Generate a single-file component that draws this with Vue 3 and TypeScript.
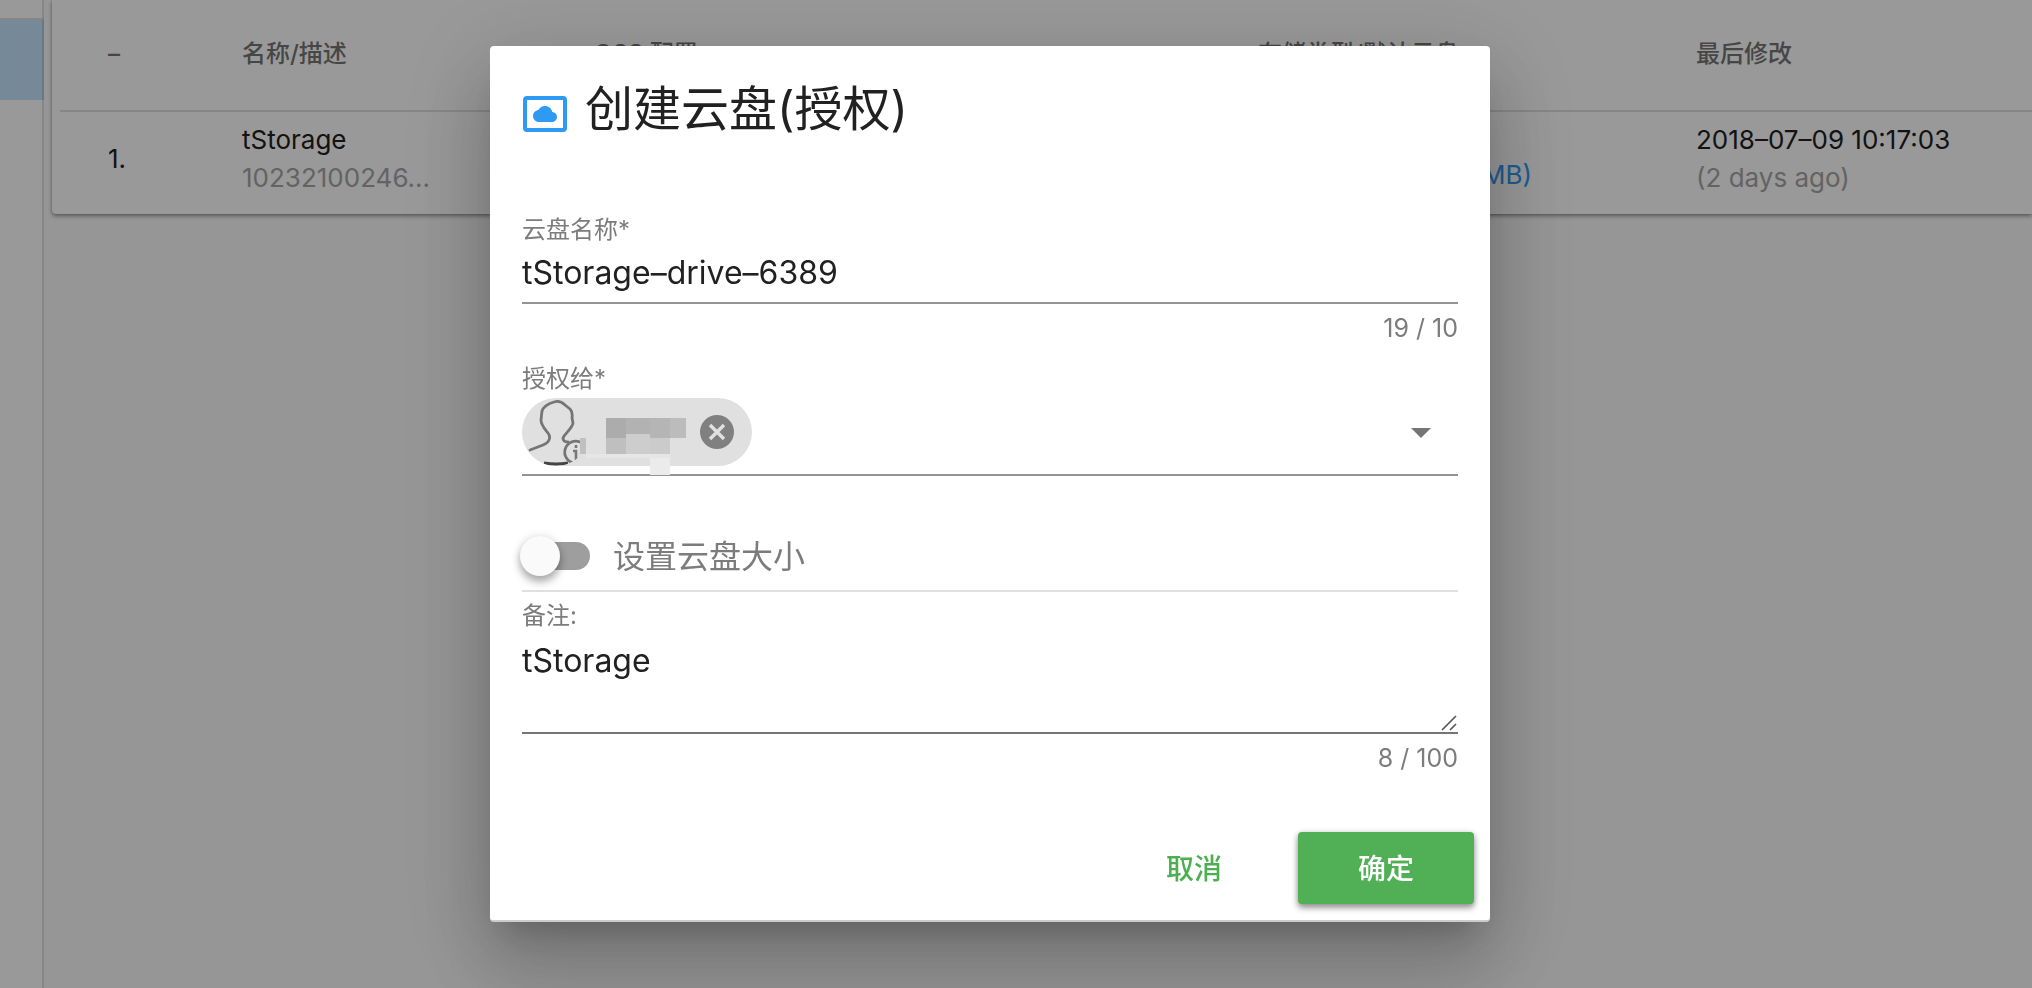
<script setup lang="ts">
import { ref } from 'vue'

const driveName = ref('tStorage–drive–6389')
const remark = ref('tStorage')
const sized = ref(false)

interface Block {
  x: number
  y: number
  w: number
  h: number
  fill: string
}

const blocks: Block[] = [
  { x: 64, y: 56, w: 84, h: 4, fill: '#e6e6e6' },
  { x: 58, y: 40, w: 6, h: 16, fill: '#c0c0c0' },
  { x: 84, y: 20, w: 20, h: 20, fill: '#acacac' },
  { x: 104, y: 20, w: 24, h: 16, fill: '#b2b2b2' },
  { x: 128, y: 20, w: 20, h: 20, fill: '#b5b5b5' },
  { x: 148, y: 20, w: 16, h: 20, fill: '#bcbcbc' },
  { x: 84, y: 40, w: 20, h: 16, fill: '#bfbfbf' },
  { x: 104, y: 36, w: 24, h: 20, fill: '#cdcdcd' },
  { x: 128, y: 40, w: 20, h: 16, fill: '#cbcbcb' },
  { x: 128, y: 60, w: 20, h: 17, fill: '#ebebeb' },
]
</script>

<template>
  <div class="page">
    <nav class="side"><div class="side-item"></div></nav>
    <main class="content">
      <section class="card">
        <table class="grid">
          <colgroup>
            <col class="c-index" /><col class="c-name" /><col class="c-oss" /><col class="c-type" /><col />
          </colgroup>
          <thead>
            <tr>
              <th>–</th>
              <th>名称/描述</th>
              <th>OSS 配置</th>
              <th>存储类型/默认云盘</th>
              <th>最后修改</th>
            </tr>
          </thead>
          <tbody>
            <tr>
              <td>1.</td>
              <td>
                <div>tStorage</div>
                <div class="muted">10232100246...</div>
              </td>
              <td></td>
              <td><a class="quota" href="#">MB)</a></td>
              <td>
                <div>2018–07–09 10:17:03</div>
                <div class="muted">(2 days ago)</div>
              </td>
            </tr>
          </tbody>
        </table>
      </section>
    </main>
  </div>

  <div class="overlay">
    <form class="dialog" role="dialog" aria-labelledby="dialog-title" @submit.prevent>
      <header class="head">
        <svg class="head-icon" viewBox="0 0 44 36" aria-hidden="true">
          <rect x="2" y="2" width="40" height="32" rx="2" fill="none" stroke="#2f9af3" stroke-width="4" />
          <path
            transform="translate(10 6)"
            fill="#2f9af3"
            d="M19.35 10.04C18.67 6.59 15.64 4 12 4 9.11 4 6.6 5.64 5.35 8.04 2.34 8.36 0 10.91 0 14c0 3.31 2.69 6 6 6h13c2.76 0 5-2.24 5-5 0-2.64-2.05-4.78-4.65-4.96z"
          />
        </svg>
        <h1 id="dialog-title">创建云盘(授权)</h1>
      </header>

      <div class="field">
        <label for="drive-name">云盘名称*</label>
        <input id="drive-name" v-model="driveName" class="line-input" type="text" />
        <div class="counter">{{ driveName.length }} / 10</div>
      </div>

      <div class="field grantee">
        <span id="grantee-label" class="label">授权给*</span>
        <div class="picker" role="combobox" aria-labelledby="grantee-label" aria-expanded="false" tabindex="0">
          <div class="chip">
            <svg class="avatar" viewBox="0 0 68 68" aria-hidden="true">
              <g fill="none" stroke="#757575" stroke-width="2.8" stroke-linecap="round" stroke-linejoin="round">
                <path d="M8 52L21 47C28 44 29 39 26 35C22 30 19 27 19 22L20 13Q22 7 32 4Q38 2 43 7L48 11Q51 14 50 20L51 25C50 31 43 35 41 40Q41 44 46 44" />
                <path d="M58 44A11 11 0 1 0 52 65" />
              </g>
              <path d="M22 65Q34 67 46 65" fill="none" stroke="#444" stroke-width="3" />
              <path d="M54 47v3M51 53h3v9" fill="none" stroke="#777" stroke-width="2.6" />
            </svg>
            <button class="chip-remove" type="button" aria-label="移除">
              <svg viewBox="0 0 34 34"><circle cx="17" cy="17" r="17" fill="#808080" /><path d="M10 10L24 24M24 10L10 24" stroke="#e0e0e0" stroke-width="3.4" /></svg>
            </button>
            <svg class="mask" viewBox="0 0 230 78" aria-hidden="true">
              <rect v-for="(b, i) in blocks" :key="i" :x="b.x" :y="b.y" :width="b.w" :height="b.h" :fill="b.fill" />
            </svg>
          </div>
          <svg class="caret" viewBox="0 0 20 10" aria-hidden="true"><path d="M0 0H20L10 10Z" fill="#757575" /></svg>
        </div>
      </div>

      <label class="switch-row">
        <input v-model="sized" class="switch" type="checkbox" role="switch" />
        <span>设置云盘大小</span>
      </label>

      <div class="field remark">
        <label for="remark">备注:</label>
        <div class="area">
          <textarea id="remark" v-model="remark"></textarea>
          <svg class="grip" viewBox="0 0 16 16" aria-hidden="true"><path d="M1 15L15 1M9 15L15 9" stroke="#555" stroke-width="1.6" /></svg>
        </div>
        <div class="counter">{{ remark.length }} / 100</div>
      </div>

      <footer class="actions">
        <button class="btn" type="button">取消</button>
        <button class="btn primary" type="submit">确定</button>
      </footer>
    </form>
  </div>
</template>

<style>
body {
  background: #fafafa;
  overflow: hidden;
}
</style>

<style scoped>
* {
  box-sizing: border-box;
}
.page,
.overlay {
  font-family: Inter, "Noto Sans CJK SC", sans-serif;
  font-weight: 400;
  color: #212121;
}
.page {
  display: flex;
  min-height: 100vh;
}
.side {
  flex: none;
  width: 44px;
  padding-top: 18px;
  background: #fff;
  border-right: 2px solid #e0e0e0;
}
.side-item {
  height: 82px;
  margin-right: -2px;
  background: #c3e4ff;
  border-top: 2px solid #e0e0e0;
  border-right: 2px solid #acc9e0;
}
.content {
  flex: 1;
  min-width: 0;
  padding-left: 8px;
}
.card {
  padding-left: 8px;
  background: #fff;
  border-radius: 0 0 0 4px;
  box-shadow: 0 2px 4px rgba(0, 0, 0, 0.4), 0 0 2px rgba(0, 0, 0, 0.2);
}
.grid {
  width: 100%;
  table-layout: fixed;
  border-collapse: separate;
  border-spacing: 0;
  font-size: 26px;
  line-height: 38px;
}
.c-index { width: 134px; }
.c-name { width: 352px; }
.c-oss { width: 664px; }
.c-type { width: 438px; }
th,
td {
  padding: 0 0 0 48px;
  text-align: left;
}
th {
  height: 112px;
  padding-bottom: 2px;
  border-bottom: 2px solid #e0e0e0;
  color: #757575;
  font-size: 24px;
  font-weight: 500;
}
td {
  height: 102px;
  padding-bottom: 9px;
}
.muted {
  color: #a6a6a6;
}
.quota {
  display: block;
  width: 274px;
  padding-top: 32px;
  text-align: right;
  text-decoration: none;
  color: #2f9af3;
}
.overlay {
  position: fixed;
  inset: 0;
  display: flex;
  align-items: center;
  justify-content: center;
  padding: 0 52px 20px 0;
  background: rgba(0, 0, 0, 0.4);
}
.dialog {
  width: 1000px;
  max-width: 100%;
  background: #fff;
  border-bottom: 2px solid #ccc;
  border-radius: 4px;
  box-shadow: 0 22px 30px -14px rgba(0, 0, 0, 0.2), 0 48px 76px 6px rgba(0, 0, 0, 0.14),
    0 18px 92px 16px rgba(0, 0, 0, 0.12);
}
.head {
  display: flex;
  align-items: center;
  gap: 18px;
  padding: 32px 33px 0;
}
.head-icon {
  width: 44px;
  height: 36px;
  margin-top: 8px;
}
h1 {
  margin: 0;
  padding-bottom: 2px;
  font-size: 48px;
  line-height: 62px;
  font-weight: 400;
}
.field {
  display: flex;
  flex-direction: column;
  margin: 0 32px;
}
.head + .field {
  padding-top: 72px;
}
.field > label,
.label {
  font-size: 24px;
  line-height: 32px;
  color: #7c7c7c;
}
.line-input {
  height: 58px;
  padding: 0 0 4px;
  border: 0;
  border-bottom: 2px solid #949494;
  outline: 0;
  background: none;
  font: inherit;
  font-size: 32px;
  color: inherit;
}
.counter {
  padding-top: 8px;
  font-size: 25px;
  line-height: 32px;
  text-align: right;
  color: #7c7c7c;
}
.grantee {
  padding-top: 18px;
}
.grantee .label {
  line-height: 34px;
}
.picker {
  display: flex;
  align-items: center;
  justify-content: space-between;
  padding: 2px 27px 8px 0;
  border-bottom: 2px solid #949494;
}
.chip {
  position: relative;
  display: flex;
  align-items: center;
  justify-content: space-between;
  width: 230px;
  height: 68px;
  padding-right: 18px;
  border-radius: 34px;
  background: #e0e0e0;
}
.avatar {
  width: 68px;
  height: 68px;
  border-radius: 50%;
}
.chip-remove {
  width: 34px;
  height: 34px;
  padding: 0;
  border: 0;
  background: none;
}
.chip-remove svg {
  display: block;
}
.mask {
  position: absolute;
  left: 0;
  top: 0;
  width: 230px;
  height: 78px;
  pointer-events: none;
}
.caret {
  width: 20px;
  height: 10px;
  margin-top: 2px;
}
.switch-row {
  display: flex;
  align-items: center;
  gap: 23px;
  height: 72px;
  margin: 44px 32px 0;
  padding-top: 2px;
  border-bottom: 2px solid #e0e0e0;
  font-size: 32px;
  line-height: 44px;
  color: #7c7c7c;
}
.switch-row span {
  padding-top: 2px;
}
.switch {
  appearance: none;
  display: flex;
  align-items: center;
  width: 62px;
  height: 28px;
  margin: 0 0 0 6px;
  border-radius: 14px;
  background: #9e9e9e;
}
.switch::before {
  content: "";
  flex: none;
  width: 40px;
  height: 40px;
  margin-left: -8px;
  border-radius: 50%;
  background: #fafafa;
  box-shadow: 0 6px 8px rgba(0, 0, 0, 0.3), 0 0 10px rgba(0, 0, 0, 0.12);
}
.switch:checked::before {
  margin-left: 30px;
}
.remark {
  padding-top: 8px;
}
.area {
  position: relative;
  display: flex;
  border-bottom: 2px solid #757575;
}
textarea {
  flex: 1;
  height: 100px;
  padding: 7px 0 0;
  border: 0;
  outline: 0;
  resize: none;
  background: none;
  font: inherit;
  font-size: 32px;
  line-height: 44px;
  color: inherit;
}
.grip {
  position: absolute;
  right: 1px;
  bottom: 1px;
  width: 16px;
  height: 16px;
}
.actions {
  display: flex;
  justify-content: flex-end;
  gap: 16px;
  padding: 58px 16px 16px;
}
.btn {
  width: 176px;
  height: 72px;
  padding: 0 0 2px;
  border: 0;
  border-radius: 4px;
  background: none;
  font: inherit;
  font-size: 28px;
  font-weight: 500;
  color: #4caf50;
}
.primary {
  background: #51af56;
  color: #fff;
  box-shadow: 0 4px 6px rgba(0, 0, 0, 0.35), 0 1px 6px rgba(0, 0, 0, 0.2);
}
</style>
